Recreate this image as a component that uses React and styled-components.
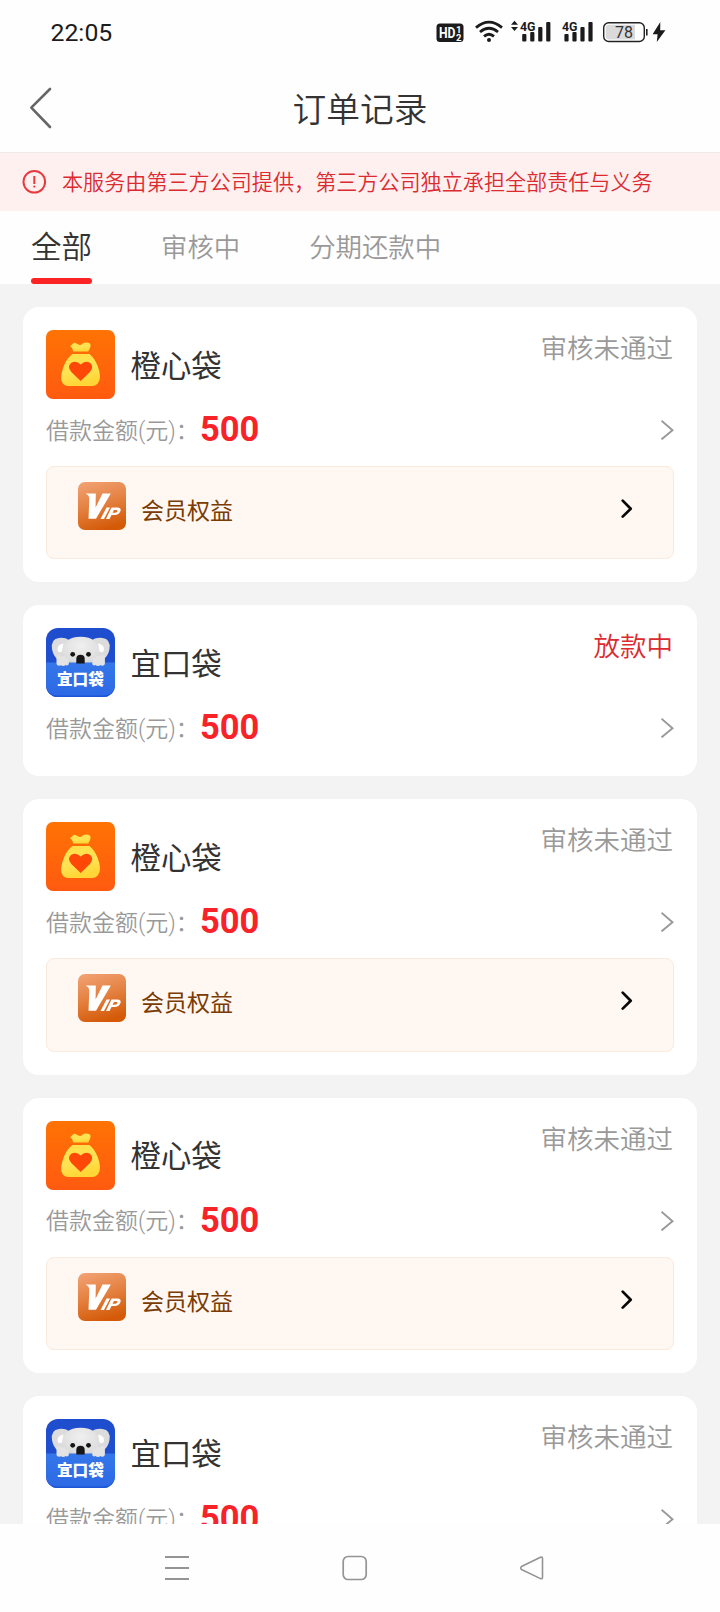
import React from "react";
import styled, { createGlobalStyle } from "styled-components";

const GlobalStyle = createGlobalStyle`
  * { box-sizing: border-box; }
  body {
    margin: 0;
    background: #fff;
    font-family: Roboto, "Noto Sans CJK SC", sans-serif;
    font-weight: 350;
  }
  svg { display: block; flex: none; }
`;

const Screen = styled.div`
  width: 720px;
  height: 1612px;
  display: flex;
  flex-direction: column;
  overflow: hidden;
  background: #fefefe;
`;

const StatusBar = styled.header`
  height: 64px;
  flex: none;
  display: flex;
  align-items: center;
  justify-content: space-between;
  padding: 0 52px 0 50.5px;
`;

const Clock = styled.span`
  font: 400 24.8px/30px Roboto, sans-serif;
  color: #1c1c1c;
  padding-top: 2px;
`;

const TitleBar = styled.div`
  height: 88px;
  flex: none;
  display: grid;
  grid-template-columns: 100px 1fr 100px;
  align-items: center;
`;

const BackButton = styled.button`
  border: 0;
  padding: 0 0 0 29px;
  background: none;
`;

const Title = styled.h1`
  margin: 0;
  padding-top: 5px;
  text-align: center;
  font-size: 33.7px;
  line-height: 48px;
  font-weight: 350;
  color: #333;
`;

const Notice = styled.div`
  height: 59px;
  flex: none;
  display: flex;
  align-items: center;
  gap: 15px;
  padding-left: 22px;
  background: #fff0f0;
  border-top: 1px solid #eeeaea;
  color: #dc2b30;
  font-size: 21.1px;
  line-height: 30px;
  white-space: nowrap;
`;

const NoticeText = styled.span`
  padding-top: 2px;
`;

const Tabs = styled.nav`
  height: 73px;
  flex: none;
  display: flex;
  padding-left: 31px;
`;

const Tab = styled.div`
  display: flex;
  flex-direction: column;
  justify-content: space-between;
  padding-top: 17px;
  margin-right: 69px;
  font-size: ${(p) => (p.$active ? "30.5px" : "26.4px")};
  line-height: 40px;
  color: ${(p) => (p.$active ? "#333" : "#999")};
`;

const TabMark = styled.span`
  height: 6px;
  border-radius: 3px;
  background: #fb2323;
`;

const OrderList = styled.main`
  flex: 1;
  min-height: 0;
  overflow: hidden;
  display: flex;
  flex-direction: column;
  gap: 23px;
  padding: 23px 23px 0;
  background: #f3f3f3;
`;

const Card = styled.article`
  flex: none;
  background: #fff;
  border-radius: 16px;
  padding: 23px;
`;

const CardHead = styled.div`
  height: 69px;
  display: flex;
`;

const AppName = styled.div`
  flex: 1;
  padding: 16.5px 0 0 15.5px;
  font-size: 30.4px;
  line-height: 40px;
  font-weight: 400;
  color: #333;
`;

const Status = styled.div`
  padding: 2px 1px 0 0;
  font-size: 26.5px;
  line-height: 34px;
  color: ${(p) => (p.$alert ? "#dc2b30" : "#999")};
`;

const AmountRow = styled.div`
  height: 56px;
  padding-top: 6px;
  display: flex;
  align-items: center;
`;

const AmountLabel = styled.span`
  width: 154px;
  padding-top: 3px;
  font-size: 23px;
  line-height: 34px;
  color: #999;
  white-space: nowrap;
`;

const Amount = styled.strong`
  flex: 1;
  font: 700 34.5px/40px Roboto, sans-serif;
  color: #f82329;
  padding-bottom: 2px;
`;

const Benefits = styled.div`
  height: 93.3px;
  margin-top: 11px;
  display: flex;
  align-items: flex-start;
  padding: 15px 40px 0 31px;
  border: 1px solid #faeadd;
  border-radius: 8px;
  background: #fff7f1;
`;

const BenefitsLabel = styled.span`
  flex: 1;
  padding: 13px 0 0 15px;
  font-size: 23px;
  line-height: 34px;
  font-weight: 400;
  color: #7a3b04;
`;

const BenefitsArrow = styled.div`
  padding-top: 17px;
`;

const SystemNav = styled.footer`
  height: 88px;
  flex: none;
  display: flex;
  align-items: flex-start;
  justify-content: space-between;
  padding: 31px 175px 0 164px;
`;

const SignalText = styled.text`
  font: 700 13.5px Roboto, sans-serif;
  fill: #1b1b1b;
`;

const SignalBars = ({ x }) => (
  <g fill="#1b1b1b">
    <rect x={x} y="34" width="4.2" height="7.5" rx="1" />
    <rect x={x + 8} y="32" width="4.2" height="9.5" rx="1" />
    <rect x={x + 16} y="27" width="4.2" height="14.5" rx="1" />
    <rect x={x + 24} y="22" width="4.2" height="19.5" rx="1" />
  </g>
);

const StatusIcons = () => (
  <svg width="232" height="64" viewBox="436 0 232 64">
    <rect x="436.5" y="23.5" width="27" height="18.5" rx="3.5" fill="#1b1b1b" />
    <text x="439" y="38" fill="#fff" fontFamily="Roboto" fontWeight="700" fontSize="14.5" textLength="16.5" lengthAdjust="spacingAndGlyphs">HD</text>
    <text x="456" y="32.5" fill="#fff" fontFamily="Roboto" fontWeight="700" fontSize="9.5">1</text>
    <text x="456" y="40.8" fill="#fff" fontFamily="Roboto" fontWeight="700" fontSize="9.5">2</text>
    <g fill="none" stroke="#1b1b1b" strokeWidth="2.8">
      <path d="M476 27.6Q489 16.6 502 27.6" />
      <path d="M480 32Q489 24.5 498 32" />
      <path d="M484 36.4Q489 32 494 36.4" />
    </g>
    <circle cx="489" cy="40" r="2" fill="#1b1b1b" />
    <path d="M514.5 20.8L518 24.7H511ZM514.5 31L518 27.1H511Z" fill="#1b1b1b" />
    <SignalText x="520" y="30.8" textLength="15.5" lengthAdjust="spacingAndGlyphs">4G</SignalText>
    <SignalBars x={522.2} />
    <SignalText x="562" y="30.8" textLength="15.5" lengthAdjust="spacingAndGlyphs">4G</SignalText>
    <SignalBars x={564.4} />
    <rect x="603.7" y="22.7" width="40.6" height="18.8" rx="5" fill="#fff" stroke="#222" strokeWidth="1.4" />
    <path d="M609 24.8h26v14.6h-26q-3.3 0-3.3-3.3v-8q0-3.3 3.3-3.3z" fill="#dadada" />
    <path d="M646.8 29v6.5" stroke="#222" strokeWidth="1.6" />
    <text x="615" y="37.8" fill="#333" fontFamily="Roboto" fontWeight="400" fontSize="16">78</text>
    <path d="M660.3 22L652.6 34.3H657.6L656.8 42L665.4 30.2H660.2Z" fill="#1b1b1b" />
  </svg>
);

const BackIcon = () => (
  <svg width="24" height="42" viewBox="0 0 24 42" fill="none" stroke="#666" strokeWidth="2.6" strokeLinecap="round" strokeLinejoin="round">
    <path d="M21 2L2.3 20.6L21 40" />
  </svg>
);

const AlertIcon = () => (
  <svg width="25" height="25" viewBox="0 0 25 25" fill="none" stroke="#e63a3f">
    <circle cx="12.3" cy="11.8" r="10.8" strokeWidth="2" />
    <path d="M12.3 6v8" strokeWidth="2" />
    <circle cx="12.3" cy="16.6" r="1.1" fill="#e63a3f" stroke="none" />
  </svg>
);

const Chevron = () => (
  <svg width="13" height="20" viewBox="0 0 13 20" fill="none" stroke="#999" strokeWidth="1.9">
    <path d="M.5 .8L11.5 10.2L.5 19.4" />
  </svg>
);

const BoldChevron = () => (
  <svg width="12" height="20" viewBox="0 0 12 20" fill="none" stroke="#080808" strokeWidth="2.7" strokeLinecap="round" strokeLinejoin="round">
    <path d="M1.7 1.6L9.7 9.8L1.7 17.6" />
  </svg>
);

const BagLogo = () => (
  <svg width="69" height="69" viewBox="0 0 69 69">
    <defs>
      <linearGradient id="bagBack" x1="0" y1="0" x2="0" y2="1">
        <stop offset="0" stopColor="#ff7304" />
        <stop offset="1" stopColor="#ff5a10" />
      </linearGradient>
      <linearGradient id="bagGold" x1="0" y1="0" x2="0.3" y2="1">
        <stop offset="0" stopColor="#ffdf48" />
        <stop offset="0.6" stopColor="#ffe354" />
        <stop offset="1" stopColor="#ffd636" />
      </linearGradient>
    </defs>
    <rect width="69" height="69" rx="7" fill="url(#bagBack)" />
    <path d="M24 16.2Q25.5 15.5 27 13.6Q28.500 12.200 30.500 13.500Q33 15.400 35 14.800Q37.500 12.600 40 12.600Q44.8 12.6 44.6 15.5Q44.6 18 42.2 21.6H27.2Q26.6 17.5 24 16.2Z" fill="url(#bagGold)" />
    <path d="M26.5 24H43.5Q48 27.5 51.5 35.5Q56.5 48 51.8 53.5Q49.5 56 46 56H22.5Q18.5 56 16.5 53Q13 48 18 35.5Q21 28 26.5 24Z" fill="url(#bagGold)" />
    <path d="M34.7 51L25.3 42Q20.8 36.8 25 33Q30 29.8 34.7 34.4Q39.4 29.8 44.2 33Q48.4 36.8 44 42Z" fill="#ff4708" />
  </svg>
);

const KoalaLogo = () => (
  <svg width="69" height="69" viewBox="0 0 69 69">
    <defs>
      <linearGradient id="koalaPocket" x1="0" y1="0" x2="0" y2="1">
        <stop offset="0" stopColor="#3577ea" />
        <stop offset="1" stopColor="#2c68e4" />
      </linearGradient>
      <radialGradient id="koalaFur" cx="0.5" cy="0.3" r="0.75">
        <stop offset="0" stopColor="#f0f0f0" />
        <stop offset="0.7" stopColor="#dddddd" />
        <stop offset="1" stopColor="#bcbdc0" />
      </radialGradient>
      <clipPath id="koalaClip"><rect width="69" height="69" rx="12" /></clipPath>
    </defs>
    <g clipPath="url(#koalaClip)">
      <rect width="69" height="69" fill="#1e4dcd" />
      <path d="M6 21Q4.500 11 13 9.900Q19 9.200 23 12L20 31H11Q7 27 6 21Z" fill="#dcdcdd" />
      <path d="M63.500 21Q65 11 56.500 9.900Q50 9.200 46 12L49 31H58Q62.500 27 63.500 21Z" fill="#dcdcdd" />
      <path d="M11.500 21Q11.500 16.500 17.500 15.500L16 23.500Q12 26 11.500 21ZM58 21Q58 16.500 52 15.500L53.500 23.500Q57.500 26 58 21Z" fill="#fff" />
      <path d="M14.500 36Q14.500 30 16 25Q17 9 34.500 8.800Q52.500 9 53.500 25Q55 30 55 36V39H14.500Z" fill="url(#koalaFur)" />
      <path d="M0 34.5H69V69H0Z" fill="url(#koalaPocket)" />
      <circle cx="26.7" cy="26.3" r="2.4" fill="#151515" />
      <circle cx="42.5" cy="26.3" r="2.4" fill="#151515" />
      <path d="M30.3 35.500V30.8Q30.3 26.8 34.500 26.8Q38.700 26.8 38.700 30.8V35.500Z" fill="#171717" />
      <g fill="#e3e3e4">
        <rect x="10.500" y="27" width="5.4" height="10.8" rx="2.7" />
        <rect x="14.700" y="28" width="5" height="10" rx="2.5" />
        <rect x="18.800" y="30" width="4" height="7.500" rx="2" />
        <rect x="53.500" y="27" width="5.4" height="10.8" rx="2.7" />
        <rect x="49.500" y="28" width="5" height="10" rx="2.5" />
        <rect x="46.300" y="30" width="4" height="7.500" rx="2" />
      </g>
      <path d="M0 60Q3 67.5 13 67.5H56Q66 67.5 69 60V69H0Z" fill="#1e55d6" />
      <text x="11" y="57.2" fill="#fff" fontFamily="Noto Sans CJK SC" fontWeight="900" fontSize="15.6">宜口袋</text>
    </g>
  </svg>
);

const VipLogo = () => (
  <svg width="48" height="48" viewBox="0 0 48 48">
    <defs>
      <linearGradient id="vipBack" x1="0.2" y1="0" x2="0.5" y2="1">
        <stop offset="0" stopColor="#f1a071" />
        <stop offset="0.5" stopColor="#e3803f" />
        <stop offset="1" stopColor="#d45a08" />
      </linearGradient>
    </defs>
    <rect width="48" height="48" rx="7" fill="url(#vipBack)" />
    <g fill="#fff">
      <path d="M7.500 11.500H17.800L17.600 25.500L24.500 11.500H32.800L18 36.800H10.500L11.300 16.500Q11.200 13 7.500 11.500Z" />
      <path d="M28.5 25.500H32L26 37H22.5Z" />
      <path fillRule="evenodd" d="M33.500 25.500H39.5Q43.5 25.8 42.5 29Q41 33 36.5 33H33.5L31.5 37H28ZM36 28L34.500 30.7H37Q39.3 30.3 39.500 28.900Q39.5 28 38.5 28Z" />
    </g>
  </svg>
);

const MenuIcon = () => (
  <svg width="26" height="26" viewBox="0 0 26 26" stroke="#949494" strokeWidth="1.8">
    <path d="M1 2H25M1 13H25M1 24H25" />
  </svg>
);

const HomeIcon = () => (
  <svg width="26" height="26" viewBox="0 0 26 26" fill="none" stroke="#949494" strokeWidth="1.7">
    <rect x="1.2" y="1.5" width="23" height="23" rx="5" />
  </svg>
);

const NavBackIcon = () => (
  <svg width="26" height="26" viewBox="0 0 26 26" fill="none" stroke="#949494" strokeWidth="1.6" strokeLinejoin="round">
    <path d="M21.5 2.2L2.5 11.5Q1 13 2.5 14.5L21.5 23.6Q23.5 24.2 23.5 22.2V3.5Q23.5 1.5 21.5 2.2Z" />
  </svg>
);

const orders = [
  { id: 1, name: "橙心袋", logo: BagLogo, status: "审核未通过", benefits: true },
  { id: 2, name: "宜口袋", logo: KoalaLogo, status: "放款中", alert: true },
  { id: 3, name: "橙心袋", logo: BagLogo, status: "审核未通过", benefits: true },
  { id: 4, name: "橙心袋", logo: BagLogo, status: "审核未通过", benefits: true },
  { id: 5, name: "宜口袋", logo: KoalaLogo, status: "审核未通过" },
];

const OrderCard = ({ order }) => {
  const Logo = order.logo;
  return (
    <Card>
      <CardHead>
        <Logo />
        <AppName>{order.name}</AppName>
        <Status $alert={order.alert}>{order.status}</Status>
      </CardHead>
      <AmountRow>
        <AmountLabel>借款金额(元)：</AmountLabel>
        <Amount>500</Amount>
        <Chevron />
      </AmountRow>
      {order.benefits && (
        <Benefits>
          <VipLogo />
          <BenefitsLabel>会员权益</BenefitsLabel>
          <BenefitsArrow><BoldChevron /></BenefitsArrow>
        </Benefits>
      )}
    </Card>
  );
};

export default function App() {
  return (
    <Screen>
      <GlobalStyle />
      <StatusBar>
        <Clock>22:05</Clock>
        <StatusIcons />
      </StatusBar>
      <TitleBar>
        <BackButton aria-label="返回"><BackIcon /></BackButton>
        <Title>订单记录</Title>
      </TitleBar>
      <Notice>
        <AlertIcon />
        <NoticeText>本服务由第三方公司提供，第三方公司独立承担全部责任与义务</NoticeText>
      </Notice>
      <Tabs>
        <Tab $active>全部<TabMark /></Tab>
        <Tab>审核中</Tab>
        <Tab>分期还款中</Tab>
      </Tabs>
      <OrderList>
        {orders.map((o) => <OrderCard key={o.id} order={o} />)}
      </OrderList>
      <SystemNav>
        <MenuIcon />
        <HomeIcon />
        <NavBackIcon />
      </SystemNav>
    </Screen>
  );
}
